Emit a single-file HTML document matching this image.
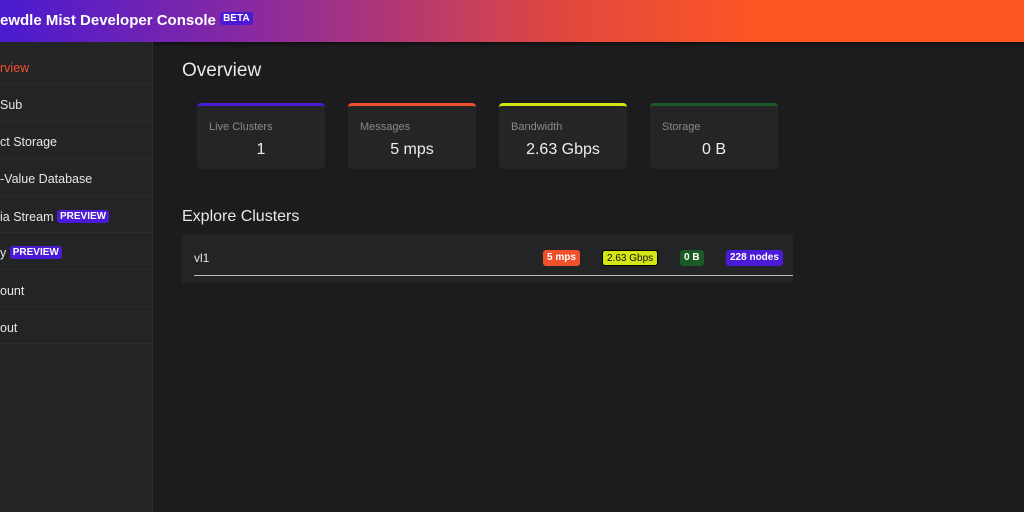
<!DOCTYPE html>
<html><head><style>
*{margin:0;padding:0;box-sizing:border-box}
body{width:1024px;height:512px;overflow:hidden;background:#1c1c1e;font-family:"Liberation Sans",sans-serif;color:#e6e6e6;position:relative}
.hdr{position:absolute;left:0;top:0;width:1024px;height:42px;background:linear-gradient(90deg,#4a1ad0 0%,#8a2aa0 25%,#e0483f 55%,#ff5722 75%,#ff5722 100%);box-shadow:0 2px 4px rgba(0,0,0,.5)}
.hdr .t{position:absolute;left:0;top:12px;font-size:15px;font-weight:bold;color:#fff;white-space:nowrap}
.badge{display:inline-block;background:#4a1ad6;color:#fff;font-weight:bold;font-size:10px;padding:1px 3px;border-radius:3px;vertical-align:top}
.side{position:absolute;left:0;top:42px;width:153px;height:470px;background:#232426;border-right:1px solid #2e2f31}
.item{position:absolute;left:0;width:153px;height:37px;border-bottom:1px solid #2b2c2e;font-size:12.5px;white-space:nowrap;padding-top:13px}
.main h2{position:absolute;font-size:19px;font-weight:normal;color:#e8e8e8}
.card{position:absolute;top:103px;width:128px;height:66px;background:#242527;border-radius:4px;border-top:3px solid}
.card .l{position:absolute;left:12px;top:15px;font-size:11px;color:#8a8a8a}
.card .v{position:absolute;left:0;width:128px;text-align:center;top:35px;font-size:16px;color:#eee}
.row{position:absolute;left:182px;top:234px;width:611px;height:49px;background:#232426}
.pill{position:absolute;top:16px;height:16px;font-size:10px;font-weight:bold;padding:2px 4px;border-radius:3px;color:#fff}
</style></head><body>
<div class="hdr"><div class="t">ewdle Mist Developer Console <span class="badge">BETA</span></div></div>
<div class="side">
<div class="item" style="top:6px;color:#f0502a">rview</div>
<div class="item" style="top:43px">Sub</div>
<div class="item" style="top:80px">ct Storage</div>
<div class="item" style="top:117px">-Value Database</div>
<div class="item" style="top:154px;padding-top:14px">ia Stream <span class="badge">PREVIEW</span></div>
<div class="item" style="top:191px">y <span class="badge">PREVIEW</span></div>
<div class="item" style="top:228px;padding-top:14px">ount</div>
<div class="item" style="top:265px;padding-top:14px">out</div>
</div>
<div class="main">
<h2 style="left:182px;top:60px">Overview</h2>
<div class="card" style="left:197px;border-color:#4a1ad6"><div class="l">Live Clusters</div><div class="v">1</div></div>
<div class="card" style="left:348px;border-color:#f0502a"><div class="l">Messages</div><div class="v">5 mps</div></div>
<div class="card" style="left:499px;border-color:#d4e614"><div class="l">Bandwidth</div><div class="v">2.63 Gbps</div></div>
<div class="card" style="left:650px;border-color:#1a5a26"><div class="l">Storage</div><div class="v">0 B</div></div>
<h2 style="left:182px;top:208px;font-size:16px">Explore Clusters</h2>
<div class="row">
<div style="position:absolute;left:12px;top:17px;font-size:12px">vl1</div>
<span class="pill" style="left:361px;background:#f0502a">5 mps</span>
<span class="pill" style="left:420px;background:#d4e614;color:#111;font-weight:normal;border:1px solid #000">2.63 Gbps</span>
<span class="pill" style="left:498px;background:#1a5a26">0 B</span>
<span class="pill" style="left:544px;background:#4a1ad6">228 nodes</span>
<div style="position:absolute;left:12px;top:41px;width:599px;height:1px;background:#bbb"></div>
</div>
</div>
</body></html>
